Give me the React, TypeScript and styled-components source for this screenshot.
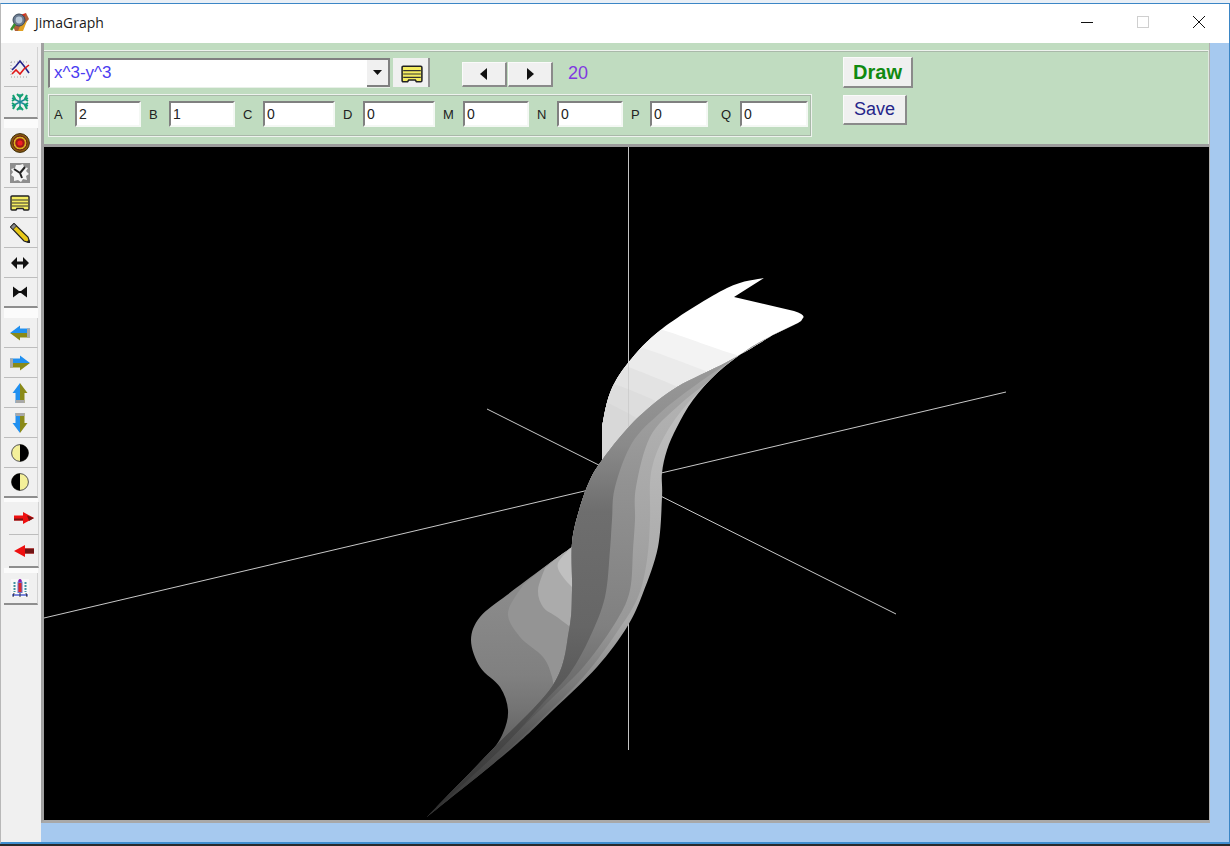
import React from 'react';
import styled, { createGlobalStyle } from 'styled-components';

type Pt = [number, number];

// catmull-rom through the points, so the surface edges stay smooth
const curve = (pts: Pt[]) => {
  let d = '';
  for (let i = 0; i < pts.length - 1; i++) {
    const p0 = pts[i - 1] || pts[i];
    const p1 = pts[i];
    const p2 = pts[i + 1];
    const p3 = pts[i + 2] || p2;
    const c1 = [p1[0] + (p2[0] - p0[0]) / 6, p1[1] + (p2[1] - p0[1]) / 6];
    const c2 = [p2[0] - (p3[0] - p1[0]) / 6, p2[1] - (p3[1] - p1[1]) / 6];
    d += ` C${c1[0]} ${c1[1]} ${c2[0]} ${c2[1]} ${p2[0]} ${p2[1]}`;
  }
  return d;
};

const shape = (pts: Pt[], tail: string) => `M${pts[0][0]} ${pts[0][1]}${curve(pts)} ${tail} Z`;

const backSheet =
  'M764 278 L734 297 L794 311 Q806 315 803 318 Q802 321 798 323 L773 335' +
  curve([[773, 335], [727, 362], [677, 387], [643, 413], [620, 437], [602, 463]]) +
  ' L602 427' +
  curve([[602, 427], [610, 393], [628, 363], [663, 328], [727, 288], [764, 278]]) +
  ' Z';

const frontSheet =
  'M798 323 L773 335' +
  curve([[773, 335], [727, 362], [677, 387], [643, 413], [620, 437], [600, 463], [590, 480], [580, 507], [572, 543], [572, 590], [569, 630], [553, 685], [490, 752], [427, 817]]) +
  curve([[427, 817], [510, 750], [553, 710], [597, 667], [627, 627], [643, 593], [658, 547], [662, 497], [662, 473], [667, 450], [677, 427], [693, 400], [717, 373], [747, 350], [773, 335], [798, 323]]) +
  ' Z';

const wing =
  'M572 547' +
  curve([[572, 547], [543, 568], [507, 595], [480, 617], [471, 640], [480, 667], [500, 687], [508, 710], [503, 733], [487, 757], [453, 790], [427, 817]]) +
  ' L520 735 L556 690 L572 630 Z';

const backBands: { pts: Pt[]; fill: string }[] = [
  { pts: [[640, 325], [663, 330], [727, 352], [790, 372]], fill: '#f3f3f3' },
  { pts: [[625, 345], [643, 348], [698, 368], [760, 392]], fill: '#ebebeb' },
  { pts: [[612, 365], [628, 367], [678, 387], [730, 410]], fill: '#e3e3e3' },
  { pts: [[600, 383], [617, 385], [660, 403], [700, 425]], fill: '#dddddd' },
  { pts: [[595, 400], [608, 403], [640, 420], [670, 440]], fill: '#d8d8d8' },
];

const frontBands: { pts: Pt[]; fill: string }[] = [
  {
    pts: [[790, 326], [767, 338], [722, 372], [688, 403], [664, 437], [651, 473], [650, 520], [647, 560], [638, 597], [617, 632], [585, 675], [540, 720], [427, 825]],
    fill: 'url(#bandC)',
  },
  {
    pts: [[780, 332], [740, 360], [707, 383], [677, 407], [650, 437], [636, 487], [635, 520], [633, 550], [630, 590], [617, 620], [585, 665], [545, 705], [427, 820]],
    fill: 'url(#bandB)',
  },
  {
    pts: [[760, 342], [725, 365], [693, 387], [660, 413], [632, 443], [615, 487], [612, 520], [610, 550], [605, 597], [590, 637], [570, 673], [543, 703], [500, 750], [427, 817]],
    fill: 'url(#bandA)',
  },
];

const wingBands: { pts: Pt[]; fill: string }[] = [
  { pts: [[523, 585], [508, 613], [520, 637], [543, 657], [552, 677], [554, 695]], fill: '#949494' },
  { pts: [[545, 568], [538, 590], [543, 607], [557, 617], [574, 630]], fill: '#ababab' },
  { pts: [[574, 545], [558, 563], [563, 577], [574, 589]], fill: '#c0c0c0' },
];

const Surface = () => (
  <PlotSvg viewBox="44 147 1165 673">
    <defs>
      <clipPath id="backClip"><path d={backSheet} /></clipPath>
      <clipPath id="frontClip"><path d={frontSheet} /></clipPath>
      <clipPath id="wingClip"><path d={wing} /></clipPath>
      <linearGradient id="wingBase" gradientUnits="userSpaceOnUse" x1="0" y1="600" x2="0" y2="817">
        <stop offset="0" stopColor="#8a8a8a" />
        <stop offset="0.35" stopColor="#808080" />
        <stop offset="0.5" stopColor="#747474" />
        <stop offset="0.7" stopColor="#5c5c5c" />
        <stop offset="1" stopColor="#2c2c2c" />
      </linearGradient>
      <linearGradient id="frontBase" gradientUnits="userSpaceOnUse" x1="0" y1="330" x2="0" y2="817">
        <stop offset="0" stopColor="#c8c8c8" />
        <stop offset="0.4" stopColor="#b0b0b0" />
        <stop offset="0.6" stopColor="#a8a8a8" />
        <stop offset="0.72" stopColor="#8c8c8c" />
        <stop offset="0.82" stopColor="#606060" />
        <stop offset="1" stopColor="#303030" />
      </linearGradient>
      <linearGradient id="bandC" gradientUnits="userSpaceOnUse" x1="0" y1="340" x2="0" y2="817">
        <stop offset="0" stopColor="#b8b8b8" />
        <stop offset="0.4" stopColor="#a4a4a4" />
        <stop offset="0.6" stopColor="#989898" />
        <stop offset="0.72" stopColor="#7a7a7a" />
        <stop offset="0.82" stopColor="#585858" />
        <stop offset="1" stopColor="#303030" />
      </linearGradient>
      <linearGradient id="bandB" gradientUnits="userSpaceOnUse" x1="0" y1="340" x2="0" y2="817">
        <stop offset="0" stopColor="#acacac" />
        <stop offset="0.3" stopColor="#929292" />
        <stop offset="0.6" stopColor="#808080" />
        <stop offset="0.72" stopColor="#6c6c6c" />
        <stop offset="0.82" stopColor="#505050" />
        <stop offset="1" stopColor="#303030" />
      </linearGradient>
      <linearGradient id="bandA" gradientUnits="userSpaceOnUse" x1="0" y1="340" x2="0" y2="817">
        <stop offset="0" stopColor="#9e9e9e" />
        <stop offset="0.22" stopColor="#8a8a8a" />
        <stop offset="0.36" stopColor="#6e6e6e" />
        <stop offset="0.6" stopColor="#666666" />
        <stop offset="0.75" stopColor="#565656" />
        <stop offset="1" stopColor="#2c2c2c" />
      </linearGradient>
    </defs>

    <line x1="628.5" y1="147" x2="628.5" y2="750" stroke="#c4c4c4" strokeWidth="1" />
    <line x1="44" y1="618" x2="1006" y2="392" stroke="#c8c8c8" strokeWidth="1" />
    <line x1="487" y1="409" x2="896" y2="614" stroke="#c8c8c8" strokeWidth="1" />

    <path d={backSheet} fill="#ffffff" />
    <g clipPath="url(#backClip)">
      {backBands.map((b, i) => (
        <path key={i} d={shape(b.pts, 'L830 520 L570 520')} fill={b.fill} />
      ))}
    </g>
    <line x1="628.5" y1="363" x2="628.5" y2="430" stroke="#c8c8c8" strokeOpacity="0.7" />

    <path d={wing} fill="url(#wingBase)" />
    <g clipPath="url(#wingClip)">
      {wingBands.map((b, i) => (
        <path key={i} d={shape(b.pts, 'L600 720 L600 520')} fill={b.fill} />
      ))}
    </g>

    <path d={frontSheet} fill="url(#frontBase)" />
    <g clipPath="url(#frontClip)">
      {frontBands.map((b, i) => (
        <path key={i} d={shape(b.pts, 'L400 830 L400 300')} fill={b.fill} />
      ))}
    </g>
  </PlotSvg>
);

const icons: Record<string, React.ReactNode> = {
  chart: (
    <>
      <path d="M1 3 H19 M1 18 H19 M1 3 V18" fill="none" stroke="#a0a0a0" strokeWidth="1" strokeDasharray="1 2" />
      <path d="M2 11 L6 7 L10 2 L14 7 L19 14" fill="none" stroke="#22228a" strokeWidth="1.6" />
      <path d="M2 15 L6 11 L10 15 L14 10 L19 6" fill="none" stroke="#e01818" strokeWidth="1.6" />
    </>
  ),
  snow: (
    <g fill="none">
      <path d="M10 2 V18 M2 6 L18 14 M18 6 L2 14" stroke="#1a8a96" strokeWidth="1.4" />
      <path d="M7 2 L10 5 L13 2 M7 18 L10 15 L13 18 M2 9 L5 7 L3 3 M18 9 L15 7 L17 3 M2 11 L5 13 L3 17 M18 11 L15 13 L17 17" stroke="#12a070" strokeWidth="2" />
    </g>
  ),
  target: (
    <>
      <circle cx="10" cy="10" r="9.4" fill="#8a5a10" stroke="#3a2a08" strokeWidth="1" />
      <circle cx="10" cy="10" r="7" fill="#d8b020" stroke="#5a1010" strokeWidth="1" />
      <circle cx="10" cy="10" r="4.8" fill="#a01818" />
      <circle cx="10" cy="10" r="2.6" fill="#f02020" />
    </>
  ),
  clock: (
    <>
      <rect x="0" y="0" width="20" height="20" fill="#8e8e8e" />
      <path d="M10 2 L13 1 L14 4 L18 5 L16 8 L19 11 L16 13 L17 17 L13 16 L11 19 L8 17 L4 18 L4 14 L1 12 L3 9 L1 6 L5 5 L6 2 Z" fill="#f4f4f4" />
      <path d="M10 10 L4 6 M10 10 L15 4 M10 10 L12 15" stroke="#222" strokeWidth="2" fill="none" />
    </>
  ),
  note: (
    <>
      <path d="M2 3 H18 Q19 3 19 4 V16 Q19 17 18 17 H14 L13 15.5 H7 L6 17 H2 Q1 17 1 16 V4 Q1 3 2 3 Z" fill="#f4ec60" stroke="#222" strokeWidth="1.4" />
      <path d="M2 7 H18 M2 10 H18 M2 13 H18" stroke="#333" strokeWidth="1.1" />
    </>
  ),
  pencil: (
    <>
      <path d="M4 0.5 L0.5 4 L14 18 L20 20 L18 14 Z" fill="#e8c818" stroke="#222" strokeWidth="1.2" />
      <path d="M0.5 4 L4 0.5 L6.5 3 L3 6.5 Z" fill="#8a8a8a" stroke="#222" strokeWidth="0.8" />
      <path d="M16.5 19 L20 20 L19 16.5 Z" fill="#222" />
    </>
  ),
  stretch: (
    <path d="M1 10 L7 4 V8.5 H13 V4 L19 10 L13 16 V11.5 H7 V16 Z" fill="#111" />
  ),
  squeeze: (
    <path d="M3 4.5 L9 9 H11 L17 4.5 V15.5 L11 11 H9 L3 15.5 Z" fill="#111" />
  ),
  left: (
    <>
      <path d="M0 10 L10 2.5 V5.5 H20 V10 Z" fill="#2090f0" />
      <path d="M0 10 L10 17.5 V14.5 H20 V10 Z" fill="#8a8a18" />
      <rect x="17" y="5.5" width="3" height="9" fill="#a8a8a8" />
    </>
  ),
  right: (
    <>
      <path d="M20 10 L10 2.5 V5.5 H0 V10 Z" fill="#2090f0" />
      <path d="M20 10 L10 17.5 V14.5 H0 V10 Z" fill="#8a8a18" />
      <rect x="0" y="5.5" width="3" height="9" fill="#a8a8a8" />
    </>
  ),
  up: (
    <>
      <path d="M10 0 L2.5 10 H5.5 V20 H10 Z" fill="#2090f0" />
      <path d="M10 0 L17.5 10 H14.5 V20 H10 Z" fill="#8a8a18" />
      <rect x="5.5" y="17" width="9" height="3" fill="#a8a8a8" />
    </>
  ),
  down: (
    <>
      <path d="M10 20 L2.5 10 H5.5 V0 H10 Z" fill="#2090f0" />
      <path d="M10 20 L17.5 10 H14.5 V0 H10 Z" fill="#8a8a18" />
      <rect x="5.5" y="0" width="9" height="3" fill="#a8a8a8" />
    </>
  ),
  halfRight: (
    <>
      <circle cx="10" cy="10" r="8.4" fill="#f4f09a" stroke="#555" strokeWidth="1" />
      <path d="M10 1.5 A8.5 8.5 0 0 1 10 18.5 Z" fill="#000" />
    </>
  ),
  halfLeft: (
    <>
      <circle cx="10" cy="10" r="8.4" fill="#f4f09a" stroke="#555" strokeWidth="1" />
      <path d="M10 1.5 A8.5 8.5 0 0 0 10 18.5 Z" fill="#000" />
    </>
  ),
  redRight: (
    <>
      <path d="M0 7.5 H9 V4 L20 10 L9 16 V12.5 H0 Z" fill="#ee1010" />
      <path d="M0 10.5 H9 V12.5 H0 Z M13 7.5 L20 10 L15 13 Z" fill="#7a1010" />
    </>
  ),
  redLeft: (
    <>
      <path d="M20 7.5 H11 V4 L0 10 L11 16 V12.5 H20 Z" fill="#ee1010" />
      <path d="M11 7.5 H20 V12.5 H11 Z" fill="#701414" />
    </>
  ),
  tower: (
    <>
      <rect x="1" y="1" width="18" height="18" fill="#f8f8f8" />
      <path d="M10 1 L12.5 4 V15 H7.5 V4 Z" fill="#7070c8" />
      <rect x="8.5" y="5" width="3" height="9" fill="#e02828" />
      <circle cx="10" cy="2.5" r="1.6" fill="#8a18b0" />
      <path d="M4.5 4 V14 M15.5 4 V14" stroke="#4090a0" strokeWidth="2" strokeDasharray="2 1" />
      <path d="M2 17 H18" stroke="#2038c8" strokeWidth="1.2" />
      <path d="M4 15 L3 19 M16 15 L17 19 M10 15 V19" stroke="#334" strokeWidth="1" />
    </>
  ),
};

const Icon = ({ name, size = 20 }: { name: string; size?: number }) => (
  <svg width={size} height={size} viewBox="0 0 20 20">{icons[name]}</svg>
);

type ToolDef = { icon: string; end?: boolean; h?: number };

const firstTools: ToolDef[] = [
  { icon: 'chart', h: 40 },
  { icon: 'snow', h: 32, end: true },
];
const secondTools: ToolDef[] = [
  { icon: 'target' },
  { icon: 'clock' },
  { icon: 'note' },
  { icon: 'pencil' },
  { icon: 'stretch' },
  { icon: 'squeeze', end: true },
];
const thirdTools: ToolDef[] = [
  { icon: 'left' },
  { icon: 'right' },
  { icon: 'up' },
  { icon: 'down' },
  { icon: 'halfRight' },
  { icon: 'halfLeft', end: true },
];

const params = [
  { name: 'A', value: '2', label: 22, input: 66 },
  { name: 'B', value: '1', label: 21, input: 66 },
  { name: 'C', value: '0', label: 21, input: 72 },
  { name: 'D', value: '0', label: 21, input: 72 },
  { name: 'M', value: '0', label: 21, input: 66 },
  { name: 'N', value: '0', label: 21, input: 66 },
  { name: 'P', value: '0', label: 20, input: 58 },
  { name: 'Q', value: '0', label: 20, input: 68, wide: true },
];

export default function App() {
  return (
    <Page>
      <GlobalStyle />
      <TopStrip />
      <Window>
        <TitleBar>
          <AppIcon viewBox="0 0 20 20" width="20" height="20">
            <path d="M3 14 L16 1 L19 7 L9 19 L5 19 Z" fill="#b0603a" />
            <path d="M10 3 L16 1 L14 6 Z" fill="#d83020" />
            <path d="M11 12 L17 9 L13 19 L8 19 Z" fill="#e0a020" />
            <circle cx="9" cy="8" r="6" fill="#6a7a90" stroke="#3a4a5a" />
            <circle cx="9" cy="8" r="3.4" fill="#b8c8d8" />
            <path d="M5 12 L1 18" stroke="#3a9030" strokeWidth="2.6" />
          </AppIcon>
          <TitleText>JimaGraph</TitleText>
          <Caption>
            <CaptionBtn>
              <svg width="12" height="12" viewBox="0 0 12 12"><path d="M0 6.5 H12" stroke="#111" strokeWidth="1" /></svg>
            </CaptionBtn>
            <CaptionBtn>
              <svg width="12" height="12" viewBox="0 0 12 12"><rect x="0.5" y="0.5" width="11" height="11" fill="none" stroke="#cfcfcf" /></svg>
            </CaptionBtn>
            <CaptionBtn>
              <svg width="14" height="14" viewBox="0 0 14 14"><path d="M1 1 L13 13 M13 1 L1 13" stroke="#111" strokeWidth="1" /></svg>
            </CaptionBtn>
          </Caption>
        </TitleBar>

        <Body>
          <Toolbar>
            {firstTools.map(t => (
              <Tool key={t.icon} $end={t.end} $h={t.h}><Icon name={t.icon} /></Tool>
            ))}
            <ToolGap $h={9} />
            {secondTools.map(t => (
              <Tool key={t.icon} $end={t.end}><Icon name={t.icon} /></Tool>
            ))}
            <ToolGap $h={10} />
            {thirdTools.map(t => (
              <Tool key={t.icon} $end={t.end}><Icon name={t.icon} /></Tool>
            ))}
            <ToolGap $h={4} />
            <Tool $indent $h={33}><Icon name="redRight" /></Tool>
            <Tool $indent $end $h={33}><Icon name="redLeft" /></Tool>
            <ToolGap $h={5} />
            <Tool $end $h={32}><Icon name="tower" /></Tool>
          </Toolbar>

          <Client>
            <Panel>
              <Controls>
                <LeftControls>
                  <TopRow>
                    <Combo>
                      <FormulaInput readOnly value="x^3-y^3" />
                      <DropBtn>
                        <svg width="9" height="5" viewBox="0 0 9 5"><path d="M0 0 H9 L4.5 5 Z" fill="#111" /></svg>
                      </DropBtn>
                    </Combo>
                    <NoteBtn><Icon name="note" size={22} /></NoteBtn>
                    <NavGroup>
                      <NavBtn>
                        <svg width="8" height="12" viewBox="0 0 8 12"><path d="M7 0 V12 L0 6 Z" fill="#111" /></svg>
                      </NavBtn>
                      <NavBtn>
                        <svg width="8" height="12" viewBox="0 0 8 12"><path d="M1 0 V12 L8 6 Z" fill="#111" /></svg>
                      </NavBtn>
                    </NavGroup>
                    <Counter>20</Counter>
                  </TopRow>
                  <ParamGroup>
                    {params.map(p => (
                      <Param key={p.name} $wide={p.wide}>
                        <ParamLabel $w={p.label}>{p.name}</ParamLabel>
                        <ParamInput $w={p.input} readOnly value={p.value} />
                      </Param>
                    ))}
                  </ParamGroup>
                </LeftControls>
                <Actions>
                  <DrawBtn>Draw</DrawBtn>
                  <SaveBtn>Save</SaveBtn>
                </Actions>
              </Controls>
              <Plot><Surface /></Plot>
            </Panel>
          </Client>
        </Body>
      </Window>
      <BottomStrip />
    </Page>
  );
}

const GlobalStyle = createGlobalStyle`
  html, body {
    margin: 0;
    padding: 0;
    width: 1230px;
    height: 846px;
    overflow: hidden;
    background: #e9eff6;
  }
`;

const Page = styled.div`
  width: 1230px;
  height: 846px;
  display: flex;
  flex-direction: column;
  font-family: "Liberation Sans", Arial, sans-serif;
`;

const TopStrip = styled.div`
  height: 3px;
  background: #e9eff6;
`;

const BottomStrip = styled.div`
  height: 2px;
  background: #2a2a2a;
`;

const Window = styled.div`
  height: 841px;
  box-sizing: border-box;
  border-top: 1px solid #3b86c6;
  border-bottom: 2px solid #3f8ed0;
  border-left: 1px solid #b8b8b8;
  border-right: 1px solid #3b86c6;
  display: flex;
  flex-direction: column;
  background: #ffffff;
`;

const TitleBar = styled.div`
  height: 39px;
  flex: none;
  display: flex;
  align-items: center;
  padding-left: 9px;
  background: #ffffff;
`;

const AppIcon = styled.svg`
  flex: none;
  margin-top: -3px;
`;

const TitleText = styled.span`
  margin-left: 5px;
  margin-top: -2px;
  font: 14px "Open Sans", sans-serif;
  color: #1a1a1a;
`;

const Caption = styled.div`
  margin-left: auto;
  display: flex;
  margin-top: -3px;
  padding-right: 2px;
`;

const CaptionBtn = styled.div`
  width: 56px;
  height: 24px;
  display: flex;
  align-items: center;
  justify-content: center;
`;

const Body = styled.div`
  flex: 1;
  display: flex;
  min-height: 0;
`;

const Toolbar = styled.div`
  width: 40px;
  flex: none;
  box-sizing: border-box;
  padding: 4px 0 0 3px;
  display: flex;
  flex-direction: column;
  background: #f0f0f0;
`;

const Tool = styled.div<{ $end?: boolean; $indent?: boolean; $h?: number }>`
  height: ${p => p.$h ?? 30}px;
  flex: none;
  box-sizing: border-box;
  width: ${p => (p.$indent ? 30 : 34)}px;
  margin-left: ${p => (p.$indent ? 5 : 0)}px;
  display: flex;
  align-items: center;
  justify-content: center;
  padding-top: ${p => (p.$h === 40 ? 4 : 0)}px;
  padding-right: ${p => (p.$indent ? 0 : 2)}px;
  background: #f0f0f0;
  border-bottom: ${p => (p.$end ? '2px solid #8e8e8e' : '1px solid #bdbdbd')};
  border-right: 1px solid #d2d2d2;
`;

const ToolGap = styled.div<{ $h: number }>`
  height: ${p => p.$h}px;
  flex: none;
  width: 34px;
  background: #fbfbfb;
`;

const Client = styled.div`
  flex: 1;
  min-width: 0;
  background: #a6c9ef;
  padding-right: 19px;
`;

const Panel = styled.div`
  height: 780px;
  box-sizing: border-box;
  display: flex;
  flex-direction: column;
  background: #c0dcc0;
  border-right: 1px solid #b0b0b0;
  border-bottom: 3px solid #a8a8a8;
  border-left: 3px solid #a0a0a0;
`;

const Controls = styled.div`
  height: 94px;
  flex: none;
  display: flex;
  box-sizing: border-box;
  margin-top: 7px;
  padding: 7px 0 0 4px;
  border-top: 1px solid #eef3ee;
  box-shadow: inset 0 1px 0 #a9b8a9;
  border-right: 1px solid #dfe8df;
`;

const LeftControls = styled.div`
  width: 764px;
  flex: none;
  display: flex;
  flex-direction: column;
  gap: 7px;
`;

const TopRow = styled.div`
  display: flex;
  align-items: flex-start;
  height: 29px;
`;

const Combo = styled.div`
  width: 342px;
  height: 30px;
  flex: none;
  display: flex;
  box-sizing: border-box;
  background: #ffffff;
  border-top: 2px solid #808080;
  border-left: 2px solid #808080;
  border-bottom: 1px solid #e8f0e8;
`;

const FormulaInput = styled.input`
  flex: 1;
  min-width: 0;
  border: 0;
  outline: 0;
  padding: 0 0 2px 4px;
  font: 17px "Liberation Sans", Arial, sans-serif;
  color: #4a3cf0;
  background: transparent;
`;

const DropBtn = styled.div`
  width: 23px;
  flex: none;
  box-sizing: border-box;
  display: flex;
  align-items: center;
  justify-content: center;
  background: #f0f0f0;
  border-right: 2px solid #808080;
  border-bottom: 2px solid #808080;
`;

const NoteBtn = styled.div`
  width: 37px;
  height: 29px;
  margin-left: 3px;
  flex: none;
  box-sizing: border-box;
  display: flex;
  align-items: center;
  justify-content: center;
  padding: 3px 0 0 3px;
  background: #f0f0f0;
  border-right: 2px solid #909090;
`;

const NavGroup = styled.div`
  margin: 4px 0 0 32px;
  display: flex;
  gap: 1px;
`;

const NavBtn = styled.div`
  width: 45px;
  height: 25px;
  box-sizing: border-box;
  display: flex;
  align-items: center;
  justify-content: center;
  background: #f0f0f0;
  border-right: 2px solid #8a8a8a;
  border-bottom: 2px solid #8a8a8a;
  border-top: 1px solid #fafafa;
  border-left: 1px solid #fafafa;
`;

const Counter = styled.span`
  margin: 5px 0 0 15px;
  font-size: 18px;
  line-height: 21px;
  color: #8038e0;
`;

const ParamGroup = styled.div`
  width: 764px;
  height: 43px;
  box-sizing: border-box;
  display: flex;
  align-items: center;
  padding: 0 0 3px 4px;
  border: 1px solid #eef3ee;
  outline: 1px solid #a9b8a9;
  outline-offset: -2px;
`;

const Param = styled.div<{ $wide?: boolean }>`
  display: flex;
  align-items: center;
  flex: none;
  margin-right: ${p => (p.$wide ? 0 : 7)}px;
  margin-left: ${p => (p.$wide ? 5 : 0)}px;
`;

const ParamLabel = styled.span<{ $w: number }>`
  width: ${p => p.$w}px;
  padding-left: 1px;
  box-sizing: border-box;
  font-size: 13px;
  color: #222;
`;

const ParamInput = styled.input<{ $w: number }>`
  width: ${p => p.$w}px;
  height: 26px;
  box-sizing: border-box;
  padding: 0 0 0 2px;
  outline: 0;
  background: #ffffff;
  font: 14px "Liberation Sans", Arial, sans-serif;
  color: #222;
  border: 2px solid;
  border-color: #808080 #f4f8f4 #f4f8f4 #808080;
`;

const Actions = styled.div`
  margin: -1px 0 0 31px;
  display: flex;
  flex-direction: column;
  align-items: flex-start;
  gap: 7px;
`;

const ActionBtn = styled.div`
  box-sizing: border-box;
  display: flex;
  align-items: center;
  justify-content: center;
  background: #f0f0f0;
  border-top: 1px solid #fafafa;
  border-left: 1px solid #fafafa;
  border-right: 2px solid #8a8a8a;
  border-bottom: 2px solid #8a8a8a;
`;

const DrawBtn = styled(ActionBtn)`
  width: 70px;
  height: 31px;
  font-size: 20px;
  font-weight: bold;
  color: #118a11;
`;

const SaveBtn = styled(ActionBtn)`
  width: 64px;
  height: 30px;
  font-size: 18px;
  color: #26268a;
`;

const Plot = styled.div`
  flex: 1;
  min-height: 0;
  background: #000000;
  border-top: 3px solid #9c9c9c;
`;

const PlotSvg = styled.svg`
  display: block;
  width: 100%;
  height: 100%;
  background: #000000;
`;
